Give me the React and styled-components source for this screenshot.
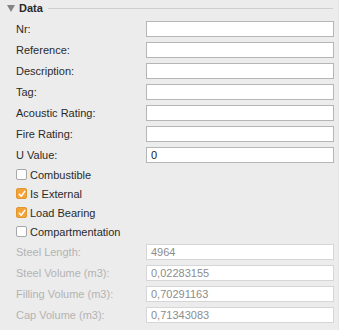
import React from 'react'
import styled, { createGlobalStyle } from 'styled-components'

const GlobalStyle = createGlobalStyle`
  html, body {
    margin: 0;
    padding: 0;
    background: #ececec;
  }
  body {
    font-family: "Liberation Sans", Arial, sans-serif;
    font-size: 11px;
    color: #262626;
  }
`

const Panel = styled.div`
  width: 339px;
  height: 330px;
  background: #ececec;
  box-sizing: border-box;
  padding: 0 5px 0 16px;
  border-right: 1px solid #e4e4e4;
`

const Header = styled.div`
  display: flex;
  align-items: center;
  height: 16px;
  margin-left: -9px;
`

const Triangle = styled.span`
  width: 0;
  height: 0;
  border-left: 4px solid transparent;
  border-right: 4px solid transparent;
  border-top: 7px solid #858585;
  margin: 1px 4px 0 0;
`

const Title = styled.span`
  font-weight: bold;
  font-size: 11px;
  color: #2a2a2a;
`

const Rule = styled.span`
  flex: 1;
  height: 1px;
  background: #cfcfcf;
  margin-left: 5px;
`

const Fields = styled.div`
  display: grid;
  grid-template-columns: 130px 188px;
  row-gap: 5px;
  margin-top: ${p => p.$top}px;
`

const Label = styled.label`
  display: flex;
  align-items: center;
  height: 16px;
  color: ${p => (p.$disabled ? '#b3b3b3' : '#2a2a2a')};
`

const Input = styled.div`
  box-sizing: border-box;
  height: 16px;
  background: #fff;
  border: 1px solid ${p => (p.$disabled ? '#d6d6d6' : '#b6b6b6')};
  padding: 0 4px;
  display: flex;
  align-items: center;
  color: ${p => (p.$disabled ? '#8c8c8c' : '#1a1a1a')};
`

const Checks = styled.div`
  margin-top: 2px;
`

const CheckRow = styled.div`
  display: flex;
  align-items: center;
  height: 19px;
  gap: 3px;
  color: #2a2a2a;
`

const Box = styled.span`
  box-sizing: border-box;
  width: 11px;
  height: 11px;
  border-radius: 2px;
  display: flex;
  align-items: center;
  justify-content: center;
  background: ${p => (p.$on ? '#f2a43a' : '#fff')};
  border: 1px solid ${p => (p.$on ? '#e4952c' : '#a8a8a8')};
`

const fields = [
  ['Nr:', ''],
  ['Reference:', ''],
  ['Description:', ''],
  ['Tag:', ''],
  ['Acoustic Rating:', ''],
  ['Fire Rating:', ''],
  ['U Value:', '0'],
]

const checks = [
  ['Combustible', false],
  ['Is External', true],
  ['Load Bearing', true],
  ['Compartmentation', false],
]

const computed = [
  ['Steel Length:', '4964'],
  ['Steel Volume (m3):', '0,02283155'],
  ['Filling Volume (m3):', '0,70291163'],
  ['Cap Volume (m3):', '0,71343083'],
]

const Check = () => (
  <svg width="8" height="8" viewBox="0 0 8 8">
    <path d="M1.3 4.2 L3.2 6.2 L6.8 1.4" fill="none" stroke="#fff" strokeWidth="1.5" strokeLinecap="round" strokeLinejoin="round" />
  </svg>
)

const App = () => (
  <Panel>
    <GlobalStyle />
    <Header>
      <Triangle />
      <Title>Data</Title>
      <Rule />
    </Header>
    <Fields $top={5}>
      {fields.map(([label, value]) => (
        <React.Fragment key={label}>
          <Label>{label}</Label>
          <Input>{value}</Input>
        </React.Fragment>
      ))}
    </Fields>
    <Checks>
      {checks.map(([label, on]) => (
        <CheckRow key={label}>
          <Box $on={on}>{on && <Check />}</Box>
          {label}
        </CheckRow>
      ))}
    </Checks>
    <Fields $top={3}>
      {computed.map(([label, value]) => (
        <React.Fragment key={label}>
          <Label $disabled>{label}</Label>
          <Input $disabled>{value}</Input>
        </React.Fragment>
      ))}
    </Fields>
  </Panel>
)

export default App
